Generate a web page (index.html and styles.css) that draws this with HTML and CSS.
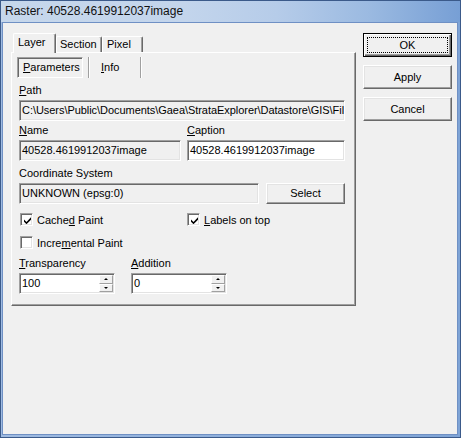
FILE: index.html
```html
<!DOCTYPE html>
<html>
<head>
<meta charset="utf-8">
<link rel="stylesheet" href="styles.css">
</head>
<body>
<div class="window">
  <div class="titlebar">Raster: 40528.4619912037image</div>
  <div class="client">
    <div class="tabctl">
      <div class="tabs">
        <div class="tab sel t-layer">Layer</div>
        <div class="tab t-section">Section</div>
        <div class="tab t-pixel">Pixel</div>
      </div>
      <div class="panel">
        <div class="subtabs">
          <div class="subtab pressed"><u>P</u>arameters</div>
          <div class="sep"></div>
          <div class="subtab info"><u>I</u>nfo</div>
          <div class="sep"></div>
        </div>
        <div class="lbl first"><u>P</u>ath</div>
        <div class="edit ro"><span class="clip">C:\Users\Public\Documents\Gaea\StrataExplorer\Datastore\GIS\Fil</span></div>
        <div class="grid2 gap-top">
          <div>
            <div class="lbl"><u>N</u>ame</div>
            <div class="edit ro">40528.4619912037image</div>
          </div>
          <div>
            <div class="lbl"><u>C</u>aption</div>
            <div class="edit">40528.4619912037image</div>
          </div>
        </div>
        <div class="lbl coord">Coordinate System</div>
        <div class="coordrow">
          <div class="edit ro">UNKNOWN (epsg:0)</div>
          <div class="btn">Select</div>
        </div>
        <div class="checks">
          <div class="cb"><span class="box"><svg width="7" height="7" viewBox="0 0 7 7"><polygon points="0,2.5 2.5,5 7,0.3 7,2.8 2.5,7.2 0,4.7" fill="#000"/></svg></span><span>Cache<u>d</u> Paint</span></div>
          <div class="cb"><span class="box"><svg width="7" height="7" viewBox="0 0 7 7"><polygon points="0,2.5 2.5,5 7,0.3 7,2.8 2.5,7.2 0,4.7" fill="#000"/></svg></span><span><u>L</u>abels on top</span></div>
          <div class="cb"><span class="box"></span><span>Incre<u>m</u>ental Paint</span></div>
        </div>
        <div class="spins">
          <div>
            <div class="lbl"><u>T</u>ransparency</div>
            <div class="edit spin"><span class="val">100</span><span class="spbtns"><span class="spb"><i class="up"></i></span><span class="spb"><i class="dn"></i></span></span></div>
          </div>
          <div>
            <div class="lbl"><u>A</u>ddition</div>
            <div class="edit spin"><span class="val">0</span><span class="spbtns"><span class="spb"><i class="up"></i></span><span class="spb"><i class="dn"></i></span></span></div>
          </div>
        </div>
      </div>
    </div>
    <div class="buttons">
      <div class="btn dbtn default"><span class="focus">OK</span></div>
      <div class="btn dbtn">Apply</div>
      <div class="btn dbtn">Cancel</div>
    </div>
  </div>
</div>
</body>
</html>
```

FILE: styles.css
```css
* { box-sizing: border-box; }
html, body { margin: 0; padding: 0; }
body {
  width: 461px;
  height: 438px;
  overflow: hidden;
  font-family: "Liberation Sans", Arial, sans-serif;
  font-size: 11px;
  color: #000;
  background: #fff;
}
u { text-decoration: underline; text-underline-offset: 1px; }

.window {
  width: 461px;
  height: 438px;
  border: 1px solid #3b5a8a;
  background: linear-gradient(to right, #9fbbe1, #7fa4d6);
  padding: 0 2px 2px 1px;
  display: flex;
  flex-direction: column;
}
.titlebar {
  height: 21px;
  margin: 0 -2px 0 -1px;
  padding-left: 4px;
  font-size: 12px;
  line-height: 20px;
  color: #111;
  white-space: nowrap;
  background: linear-gradient(to right, #c6d7eb 0%, #c3d5ec 40%, #b6cce9 60%, #9bbae1 80%, #779fd5 100%);
}
.client {
  flex: 1;
  border: 1px solid #6f90c4;
  background: #f0f0f0;
  display: flex;
  align-items: flex-start;
  padding: 10px 0 0 8px;
}

.tabctl { width: 345px; display: flex; flex-direction: column; }
.tabs { height: 19px; display: flex; align-items: flex-end; padding-left: 2px; }
.tab {
  height: 16px;
  border: 1px solid;
  border-color: #fff #696969 transparent #fff;
  border-bottom: none;
  box-shadow: inset -1px 0 0 #a0a0a0;
  border-radius: 2px 2px 0 0;
  background: #f0f0f0;
  line-height: 14px;
  white-space: nowrap;
}
.tab.sel {
  height: 20px;
  margin-bottom: -1px;
  position: relative;
  z-index: 1;
  line-height: 16px;
}
.t-layer { width: 43px; padding-left: 4px; }
.t-section { width: 46px; padding-left: 3px; }
.t-pixel { width: 41px; padding-left: 4px; }

.panel {
  height: 254px;
  border: 1px solid;
  border-color: #fff #696969 #696969 #fff;
  box-shadow: inset -1px -1px 0 #a0a0a0;
  padding: 4px 10px 0 7px;
}
.subtabs { display: flex; height: 21px; margin-left: -2px; }
.subtab { line-height: 19px; white-space: nowrap; }
.subtab.pressed {
  width: 66px;
  border: 1px solid;
  border-color: #a0a0a0 #fff #fff #a0a0a0;
  box-shadow: inset 1px 1px 0 #696969;
  padding-left: 5px;
}
.subtab.info { width: 50px; padding-left: 10px; border: 1px solid transparent; }
.sep {
  width: 2px;
  margin-left: 5px;
  border-left: 1px solid #a0a0a0;
  border-right: 1px solid #fff;
}
.subtab.info + .sep { margin-left: 0; }

.lbl { line-height: 13px; height: 13px; margin-bottom: 3px; white-space: nowrap; }
.lbl.first { margin-top: 6px; }
.lbl.coord { margin-top: 6px; }
.gap-top { margin-top: 3px; }

.edit {
  height: 21px;
  border: 1px solid;
  border-color: #a0a0a0 #fff #fff #a0a0a0;
  box-shadow: inset 1px 1px 0 #696969, inset -1px -1px 0 #e3e3e3;
  background: #fff;
  padding: 0 2px;
  line-height: 19px;
  white-space: nowrap;
  overflow: hidden;
}
.edit.ro { background: #f0f0f0; }
.clip { letter-spacing: -0.05px; }

.grid2 { display: grid; grid-template-columns: 162px 1fr; column-gap: 6px; }
.coordrow { display: grid; grid-template-columns: 1fr 79px; column-gap: 7px; }

.btn {
  height: 21px;
  border: 1px solid;
  border-color: #fff #696969 #696969 #fff;
  box-shadow: inset -1px -1px 0 #a0a0a0, inset 1px 1px 0 #e3e3e3;
  background: #f0f0f0;
  text-align: center;
  line-height: 19px;
}

.checks {
  margin-top: 4px;
  display: grid;
  grid-template-columns: 168px 1fr;
  grid-auto-rows: 23px;
}
.cb { display: flex; align-items: center; white-space: nowrap; }
.cb:first-child { padding-left: 1px; }
.cb:nth-child(3) { padding-left: 1px; }
.box {
  width: 13px;
  height: 13px;
  margin-right: 4px;
  border: 1px solid;
  border-color: #a0a0a0 #fff #fff #a0a0a0;
  box-shadow: inset 1px 1px 0 #696969, inset -1px -1px 0 #e3e3e3;
  background: #fff;
  display: flex;
  align-items: center;
  justify-content: center;
}
.box svg { display: block; margin-left: 1px; margin-top: 1px; }

.spins { margin-top: 3px; display: grid; grid-template-columns: 96px 96px; column-gap: 16px; }
.spin { display: flex; padding-right: 1px; }
.spin .val { flex: 1; }
.spbtns { width: 14px; margin: 1px 0; display: flex; flex-direction: column; }
.spb {
  flex: 1;
  border: 1px solid;
  border-color: #fff #a0a0a0 #a0a0a0 #fff;
  background: #f0f0f0;
  display: flex;
  align-items: center;
  justify-content: center;
}
.spb i { display: block; width: 0; height: 0; border-left: 2px solid transparent; border-right: 2px solid transparent; }
.spb i.up { border-bottom: 2px solid #000; }
.spb i.dn { border-top: 2px solid #000; }

.buttons { margin-left: 7px; width: 89px; display: flex; flex-direction: column; gap: 8px; }
.dbtn { height: 24px; line-height: 22px; }
.dbtn.default {
  border: 1px solid #000;
  box-shadow: inset 1px 1px 0 #fff, inset -1px -1px 0 #696969, inset -2px -2px 0 #a0a0a0;
  padding: 3px;
  display: flex;
}
.focus {
  flex: 1;
  border: 1px dotted #000;
  line-height: 14px;
  text-align: center;
}
```
